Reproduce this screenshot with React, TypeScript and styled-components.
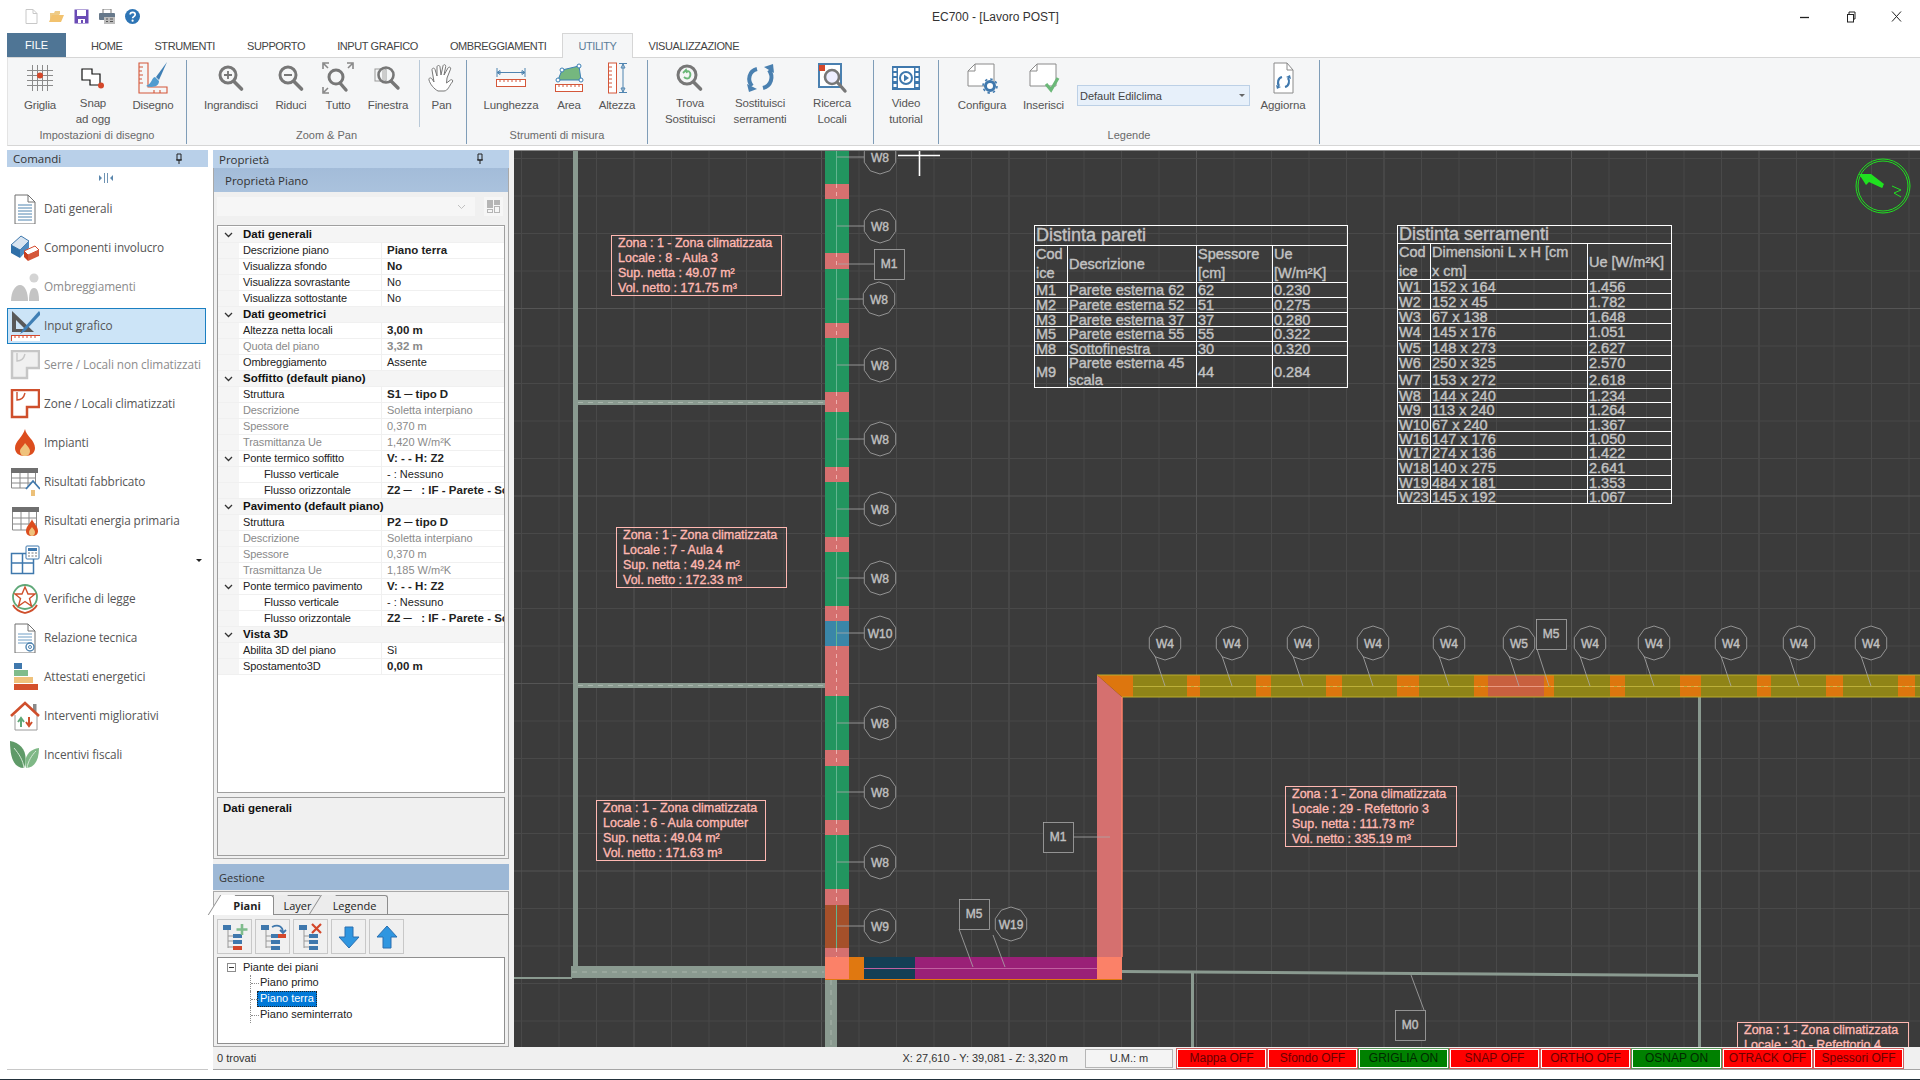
import React from 'react';
import styled, { createGlobalStyle } from 'styled-components';

const GlobalStyle = createGlobalStyle`
  html, body { margin: 0; padding: 0; background: #fff; }
  #root { width: 1920px; height: 1080px; overflow: hidden; }
  * { box-sizing: border-box; }
`;

const UI_FONT = `"Liberation Sans", Arial, sans-serif`;
const SIDE_FONT = `"Open Sans", "Liberation Sans", sans-serif`;

const Window = styled.div`
  width: 1920px;
  height: 1080px;
  display: flex;
  flex-direction: column;
  background: #fff;
  font-family: ${UI_FONT};
  border-bottom: 1px solid #22303a;
  overflow: hidden;
`;

/* ---------- title bar ---------- */
const TitleBar = styled.div`
  height: 33px;
  display: flex;
  align-items: center;
  flex-shrink: 0;
`;
const QuickBar = styled.div`
  width: 932px;
  padding-left: 25px;
  display: flex;
  align-items: center;
  gap: 10px;
`;
const Title = styled.div`
  font-size: 12px;
  color: #333;
  width: 118px;
  white-space: nowrap;
`;
const WinControls = styled.div`
  margin-left: auto;
  width: 120px;
  display: flex;
  align-items: center;
  justify-content: space-between;
  padding-right: 18px;
`;

/* ---------- ribbon ---------- */
const TabRow = styled.div`
  height: 24px;
  flex-shrink: 0;
  display: flex;
  align-items: stretch;
  padding-left: 7px;
`;
const FileTab = styled.div`
  width: 59px;
  background: #4f7595;
  color: #fff;
  font-size: 11px;
  display: flex;
  align-items: center;
  justify-content: center;
  margin-right: 9px;
`;
const RibbonTab = styled.div<{ $active?: boolean }>`
  padding: 0 15px;
  font-size: 11px;
  letter-spacing: -0.4px;
  display: flex;
  align-items: center;
  color: ${(p) => (p.$active ? '#5b7c99' : '#444')};
  background: ${(p) => (p.$active ? '#f5f6f7' : 'transparent')};
  border: 1px solid ${(p) => (p.$active ? '#d6d6d6' : 'transparent')};
  border-bottom: none;
  margin-bottom: -1px;
  position: relative;
  z-index: 1;
`;
const Ribbon = styled.div`
  height: 89px;
  flex-shrink: 0;
  margin-left: 7px;
  margin-bottom: 4px;
  background: #f5f6f7;
  border-top: 1px solid #d6d6d6;
  border-bottom: 1px solid #d6d6d6;
  border-left: 1px solid #e4e4e4;
  padding-top: 2px;
  display: flex;
`;
const Group = styled.div<{ $w: number; $pad: number }>`
  width: ${(p) => p.$w}px;
  height: 84px;
  padding-left: ${(p) => p.$pad}px;
  border-right: 1px solid #7f9db8;
  display: flex;
  flex-direction: column;
  flex-shrink: 0;
`;
const GroupRow = styled.div`
  flex: 1;
  display: flex;
  align-items: flex-start;
`;
const GroupLabel = styled.div<{ $pad: number }>`
  height: 18px;
  margin-left: -${(p) => p.$pad}px;
  font-size: 11px;
  color: #6a6a6a;
  text-align: center;
  line-height: 16px;
`;
const RibbonBtn = styled.div<{ $w: number; $sep?: boolean }>`
  width: ${(p) => p.$w}px;
  height: 67px;
  flex-shrink: 0;
  display: flex;
  flex-direction: column;
  align-items: center;
  border-left: ${(p) => (p.$sep ? '1px solid #b9c9d8' : 'none')};
`;
const BtnIcon = styled.div`
  height: 36px;
  display: flex;
  align-items: center;
  justify-content: center;
`;
const BtnLabel = styled.div<{ $two: boolean }>`
  font-size: 11.5px;
  line-height: 16px;
  letter-spacing: -0.15px;
  color: #555;
  text-align: center;
  white-space: nowrap;
  margin-top: ${(p) => (p.$two ? '-1px' : '1px')};
`;
const Combo = styled.div`
  width: 173px;
  height: 21px;
  margin-top: 25px;
  flex-shrink: 0;
  background: #e7f0fa;
  border: 1px solid #bcd0e6;
  display: flex;
  align-items: center;
  justify-content: space-between;
  padding: 0 4px 0 2px;
  font-size: 11px;
  color: #444;
`;
const ComboCaret = styled.span`
  width: 0;
  height: 0;
  border-left: 3px solid transparent;
  border-right: 3px solid transparent;
  border-top: 3px solid #666;
`;

/* ---------- work area ---------- */
const Workspace = styled.div`
  height: 920px;
  flex-shrink: 0;
  display: flex;
  padding-left: 7px;
`;
const CommandPanel = styled.div`
  width: 201px;
  flex-shrink: 0;
  display: flex;
  flex-direction: column;
  border-bottom: 1px solid #c8c8c8;
`;
const PaneHeader = styled.div<{ $h: number }>`
  height: ${(p) => p.$h}px;
  flex-shrink: 0;
  background: #b9d0e9;
  display: flex;
  align-items: center;
  justify-content: space-between;
  font-family: ${SIDE_FONT};
  font-size: 11.5px;
  color: #333;
  padding: 0 25px 0 6px;
`;
const CollapseRow = styled.div`
  height: 24px;
  display: flex;
  justify-content: center;
  align-items: center;
  padding-right: 4px;
  padding-bottom: 2px;
`;
const CommandItem = styled.div<{ $active?: boolean }>`
  width: 199px;
  height: 36px;
  margin-bottom: 3px;
  flex-shrink: 0;
  display: flex;
  align-items: center;
  gap: 4px;
  padding-left: 2px;
  position: relative;
  background: ${(p) => (p.$active ? '#cce4f7' : 'transparent')};
  border: 1px solid ${(p) => (p.$active ? '#1b7fc1' : 'transparent')};
`;
const CommandIcon = styled.div`
  width: 30px;
  height: 30px;
  flex-shrink: 0;
`;
const CommandLabel = styled.span<{ $dim?: boolean }>`
  font-family: ${SIDE_FONT};
  font-size: 11.8px;
  letter-spacing: -0.1px;
  padding-bottom: 2px;
  color: ${(p) => (p.$dim ? '#8c8c8c' : '#565656')};
  white-space: nowrap;
`;
const MenuCaret = styled.span`
  position: absolute;
  right: 3px;
  top: 16px;
  width: 0;
  height: 0;
  border-left: 3px solid transparent;
  border-right: 3px solid transparent;
  border-top: 3px solid #222;
`;

const RightArea = styled.div`
  width: 1707px;
  margin-left: 5px;
  flex-shrink: 0;
  display: flex;
  flex-direction: column;
`;
const RightTop = styled.div`
  height: 897px;
  display: flex;
  background: #f0f0f0;
`;
const PropColumn = styled.div`
  width: 296px;
  flex-shrink: 0;
  margin-right: 5px;
  display: flex;
  flex-direction: column;
`;
const PropPane = styled.div`
  height: 691px;
  flex-shrink: 0;
  border: 1px solid #a9a9a9;
  border-top: none;
  background: #f0f0f0;
  display: flex;
  flex-direction: column;
`;
const SubHeader = styled.div`
  height: 24px;
  flex-shrink: 0;
  background: linear-gradient(#a3bcd9, #aac2dd);
  font-family: ${SIDE_FONT};
  font-size: 11.5px;
  color: #333;
  display: flex;
  align-items: center;
  padding-left: 11px;
`;
const ComboRow = styled.div`
  height: 19px;
  margin: 5px 0 9px 3px;
  flex-shrink: 0;
  display: flex;
  gap: 9px;
`;
const EmptyCombo = styled.div`
  width: 258px;
  background: #f6f6f6;
  display: flex;
  align-items: center;
  justify-content: flex-end;
  padding-right: 9px;
`;
const LayoutBtn = styled.div`
  width: 19px;
  background: #f6f6f6;
  display: flex;
  align-items: center;
  justify-content: center;
`;
const PropGrid = styled.div`
  width: 288px;
  height: 568px;
  margin-left: 3px;
  flex-shrink: 0;
  border: 1px solid #9f9f9f;
  background: #fff;
  padding-top: 1px;
  overflow: hidden;
`;
const PropRow = styled.div<{ $cat?: boolean }>`
  height: 16px;
  display: flex;
  align-items: stretch;
  background: ${(p) => (p.$cat ? '#f5f5f5' : '#fff')};
  border-bottom: 1px solid #f0f0f0;
  white-space: nowrap;
`;
const Gutter = styled.div`
  width: 21px;
  flex-shrink: 0;
  background: #f5f5f5;
  display: flex;
  align-items: center;
  padding-left: 6px;
`;
const PropName = styled.div<{ $dim?: boolean; $indent?: boolean }>`
  width: 143px;
  flex-shrink: 0;
  font-size: 11px;
  line-height: 15px;
  padding-left: ${(p) => (p.$indent ? '25px' : '4px')};
  color: ${(p) => (p.$dim ? '#8a8a8a' : '#222')};
  letter-spacing: -0.1px;
  border-right: 1px solid #f0f0f0;
`;
const PropValue = styled.div<{ $dim?: boolean; $bold?: boolean }>`
  flex: 1;
  overflow: hidden;
  font-size: ${(p) => (p.$bold ? '11.5px' : '11px')};
  font-weight: ${(p) => (p.$bold ? 700 : 400)};
  line-height: 15px;
  padding-left: 5px;
  color: ${(p) => (p.$dim ? '#8a8a8a' : '#222')};
`;
const CatName = styled.div`
  font-size: 11.5px;
  font-weight: 700;
  line-height: 15px;
  padding-left: 4px;
  color: #111;
`;
const DescBox = styled.div`
  width: 288px;
  height: 59px;
  margin: 4px 0 0 3px;
  flex-shrink: 0;
  border: 1px solid #9f9f9f;
  padding: 4px 5px;
  font-size: 11.5px;
  font-weight: 700;
  color: #111;
`;
const MgmtHeader = styled.div`
  height: 26px;
  margin-top: 5px;
  flex-shrink: 0;
  background: #9db8d6;
  font-family: ${SIDE_FONT};
  font-size: 11px;
  color: #333;
  display: flex;
  align-items: center;
  padding-left: 6px;
`;
const MgmtBody = styled.div`
  flex: 1;
  border: 1px solid #a9a9a9;
  margin-top: 1px;
  display: flex;
  flex-direction: column;
  padding-top: 3px;
`;
const TabStrip = styled.div`
  height: 20px;
  flex-shrink: 0;
  display: flex;
  padding-left: 7px;
  border-bottom: 1px solid #8d8d8d;
`;
const MgmtTab = styled.div<{ $w: number; $active?: boolean }>`
  width: ${(p) => p.$w}px;
  height: ${(p) => (p.$active ? '20px' : '19px')};
  position: relative;
  display: flex;
  align-items: center;
  justify-content: center;
  font-family: ${SIDE_FONT};
  font-size: 11px;
  font-weight: ${(p) => (p.$active ? 700 : 400)};
  color: #222;
  background: ${(p) => (p.$active ? '#fff' : '#ececec')};
  border-top: 1px solid #8d8d8d;
  border-right: 1px solid #8d8d8d;
  border-top-right-radius: 3px;
  z-index: ${(p) => (p.$active ? 2 : 1)};
  &::before {
    content: '';
    position: absolute;
    left: -7px;
    top: -1px;
    width: 14px;
    height: ${(p) => (p.$active ? '20px' : '19px')};
    background: inherit;
    border-left: 1px solid #8d8d8d;
    transform: skewX(-32deg);
    z-index: -1;
  }
`;
const ToolRow = styled.div`
  height: 35px;
  margin: 4px 0 3px 3px;
  flex-shrink: 0;
  display: flex;
  gap: 3px;
`;
const ToolBtn = styled.div`
  width: 35px;
  height: 35px;
  border: 1px solid #c8c8c8;
  background: #f0f0f0;
  display: flex;
  align-items: center;
  justify-content: center;
`;
const TreeBox = styled.div`
  width: 288px;
  height: 87px;
  margin-left: 3px;
  flex-shrink: 0;
  border: 1px solid #8f8f8f;
  background: #fff;
  padding-top: 1px;
  position: relative;
`;
const TreeRoot = styled.div`
  height: 16px;
  display: flex;
  align-items: center;
  padding-left: 9px;
  font-size: 11px;
  color: #222;
`;
const Expander = styled.span`
  width: 9px;
  height: 9px;
  margin-right: 7px;
  border: 1px solid #8d8d8d;
  position: relative;
  &::after {
    content: '';
    position: absolute;
    left: 1px;
    right: 1px;
    top: 3px;
    height: 1px;
    background: #333;
  }
`;
const TreeLeaf = styled.div`
  height: 16px;
  margin-left: 32px;
  padding-left: 9px;
  display: flex;
  align-items: center;
  font-size: 11px;
  color: #222;
  border-left: 1px dotted #8d8d8d;
  position: relative;
  &::before {
    content: '';
    position: absolute;
    left: 0;
    top: 8px;
    width: 8px;
    border-top: 1px dotted #8d8d8d;
  }
`;
const LeafText = styled.span<{ $selected?: boolean }>`
  padding: 0 3px;
  margin-left: -3px;
  height: 16px;
  line-height: 15px;
  background: ${(p) => (p.$selected ? '#0078d7' : 'transparent')};
  color: ${(p) => (p.$selected ? '#fff' : '#222')};
  outline: ${(p) => (p.$selected ? '1px dotted #222' : 'none')};
  outline-offset: -1px;
`;

/* ---------- canvas ---------- */
const Canvas = styled.div`
  flex: 1;
  position: relative;
  background: #3b3b3b;
  overflow: hidden;
  border-top: 1px solid #8a8a8a;
`;
const PlanSvg = styled.svg`
  position: absolute;
  left: 0;
  top: 0;
  display: block;
`;
const ZoneBox = styled.div<{ $x: number; $y: number; $w: number }>`
  position: absolute;
  left: ${(p) => p.$x - 514}px;
  top: ${(p) => p.$y - 151}px;
  width: ${(p) => p.$w}px;
  height: 61px;
  border: 1px solid #ffb8b2;
  padding: 0 6px;
  color: #ffb8b2;
  font-size: 12.5px;
  line-height: 15px;
  white-space: nowrap;
  -webkit-text-stroke: 0.35px #ffb8b2;
`;
const SheetTable = styled.table<{ $x: number; $w: number }>`
  position: absolute;
  left: ${(p) => p.$x - 514}px;
  top: 74px;
  width: ${(p) => p.$w}px;
  border-collapse: collapse;
  table-layout: fixed;
  color: #c2c2c2;
  font-size: 14.5px;
  line-height: 12px;
  -webkit-text-stroke: 0.4px #c2c2c2;
`;
const SheetRow = styled.tr<{ $h: number }>`
  height: ${(p) => p.$h}px;
`;
const SheetCell = styled.td`
  border: 1px solid #fff;
  padding: 0 1px;
  white-space: nowrap;
`;
const SheetLines = styled.div<{ $lh: number }>`
  line-height: ${(p) => p.$lh}px;
  margin: -2px 0;
`;
const SheetTitle = styled(SheetCell)`
  font-size: 18px;
  line-height: 15px;
`;

/* ---------- status bar ---------- */
const StatusBar = styled.div`
  height: 23px;
  flex-shrink: 0;
  background: #f0f0f0;
  border-bottom: 1px solid #a5a5a5;
  display: flex;
  align-items: center;
  padding: 0 17px 0 4px;
  font-size: 11px;
  color: #333;
`;
const Coords = styled.div`
  margin-left: auto;
  margin-right: 17px;
  white-space: nowrap;
`;
const UnitBox = styled.div`
  width: 88px;
  height: 19px;
  margin-right: 4px;
  border: 1px solid #b5b5b5;
  display: flex;
  align-items: center;
  justify-content: center;
  background: #f4f4f4;
`;
const ToggleRow = styled.div`
  display: flex;
  gap: 2px;
`;
const Toggle = styled.div<{ $on: boolean }>`
  width: 89px;
  height: 19px;
  background: ${(p) => (p.$on ? '#008000' : '#ff0000')};
  color: ${(p) => (p.$on ? '#002a00' : '#6a0000')};
  border: 1px solid #fff;
  outline: 1px solid ${(p) => (p.$on ? '#5a9a5a' : '#d06060')};
  font-size: 12px;
  display: flex;
  align-items: center;
  justify-content: center;
`;

/* ---------- icons ---------- */
const Svg = ({ s = 32, h, children }: { s?: number; h?: number; children: React.ReactNode }) => (
  <svg width={s} height={h ?? s} viewBox={`0 0 ${s} ${h ?? s}`} fill="none">
    {children}
  </svg>
);

const PinIcon = () => (
  <Svg s={8} h={12}>
    <path d="M2 1h4v6H2zM1 7h6M4 7v4" stroke="#222" strokeWidth="1" />
  </Svg>
);
const Chevron = () => (
  <Svg s={9} h={6}>
    <path d="M1 1l3.5 3.5L8 1" stroke="#333" strokeWidth="1.3" />
  </Svg>
);

const quickIcons = [
  <Svg s={13} h={15} key="new">
    <path d="M1 .5h7l4 4v10H1z" fill="#fff" stroke="#c8c8c8" />
    <path d="M8 .5v4h4" stroke="#c8c8c8" />
  </Svg>,
  <Svg s={16} h={13} key="open">
    <path d="M2 12V3h4l1-2h5v3" fill="#eecb86" />
    <path d="M1 12l3-7h12l-3 7z" fill="#f2c26e" />
  </Svg>,
  <Svg s={15} h={15} key="save">
    <rect x=".5" y=".5" width="14" height="14" fill="#6a4bb5" />
    <rect x="3" y="1" width="9" height="6" fill="#fff" />
    <rect x="4" y="10" width="7" height="4" fill="#fff" />
    <rect x="7" y="11" width="2" height="3" fill="#6a4bb5" />
  </Svg>,
  <Svg s={16} h={15} key="print">
    <rect x="4" y="0" width="8" height="5" fill="#fff" stroke="#777" />
    <rect x="0" y="4" width="16" height="7" rx="1" fill="#66788a" />
    <rect x="5" y="8" width="11" height="7" fill="#bcbcbc" />
    <path d="M7 10h2M11 10h3M7 12.5h2M11 12.5h3" stroke="#555" />
  </Svg>,
  <Svg s={15} h={15} key="help">
    <circle cx="7.5" cy="7.5" r="7.5" fill="#2e75b5" />
    <path d="M5.2 5.6c0-3 5-3 5 0 0 2-2.6 2-2.6 3.6" stroke="#fff" strokeWidth="1.7" />
    <circle cx="7.6" cy="11.7" r="1.1" fill="#fff" />
  </Svg>,
];

const Mag = ({ children, r = 8 }: { children?: React.ReactNode; r?: number }) => (
  <Svg>
    <path d="M18.5 19l8 8" stroke="#777" strokeWidth="3.6" strokeLinecap="round" />
    <circle cx="13" cy="13" r={r} stroke="#777" strokeWidth="3" fill="#f5f6f7" />
    {children}
  </Svg>
);

const GridIcon = () => (
  <Svg>
    <path d="M3 8.500h26M3 13.500h26M3 18.500h26M3 23.500h26M8.500 3v26M13.500 3v26M18.500 3v26M23.500 3v26" stroke="#8b8b8b" />
    <circle cx="16" cy="13.500" r="3" fill="#d4472a" />
  </Svg>
);
const SnapIcon = () => (
  <Svg>
    <path d="M5 7h10v5h8v11H13v-5H5z" stroke="#111" strokeWidth="1.2" fill="#fff" />
    <circle cx="24" cy="23.500" r="3" fill="#d4472a" />
  </Svg>
);
const DrawIcon = () => (
  <Svg>
    <path d="M2 1h9v24h19v6H2zM2 5h4M2 9h3M2 13h4M2 17h3M2 21h4M17 31v-3M23 31v-3" stroke="#d4573a" strokeWidth="1.1" />
    <path d="M30 0L19 15l3 3z" fill="#3f7fb5" />
    <path d="M18 15c-4 1-2 6-9 9 6 2 13 1 13-5z" fill="#4f9bd0" />
  </Svg>
);
const AllIcon = () => (
  <Svg>
    <path d="M18 21l6 7" stroke="#777" strokeWidth="3.4" strokeLinecap="round" />
    <circle cx="14" cy="15" r="7" stroke="#777" strokeWidth="3" />
    <path d="M1 7V1h6M2 2l4 4M31 7V1h-6M30 2l-4 4M1 25v6h6M2 30l4-4" stroke="#888" strokeWidth="1.6" />
  </Svg>
);
const WindowIcon = () => (
  <Svg>
    <path d="M19 19l7 7" stroke="#777" strokeWidth="3.4" strokeLinecap="round" />
    <rect x="3" y="7" width="11" height="12" fill="#f5f6f7" stroke="#999" />
    <circle cx="14" cy="13" r="7.500" stroke="#777" strokeWidth="2.600" />
    <rect x="10" y="8" width="4" height="10" fill="#ccc" />
  </Svg>
);
const HandIcon = () => (
  <Svg>
    <path
      d="M12 29c-4-2-8-7-9-11-.5-2 1.500-3 3-1l2 3L6 8c-.3-2 2.400-2.600 3-.6L11 14 11 5c0-2 3-2 3 0l1 8 2-9c.4-2 3-1.500 2.700.4L18 13l4-7c1-1.800 3.400-.6 2.500 1.200L21 16l-.5 5 4-3c1.500-1 3 .6 1.800 2-3 3.500-4.300 9-8.300 9z"
      stroke="#777"
      strokeWidth="1"
      fill="#fff"
    />
  </Svg>
);
const LengthIcon = () => (
  <Svg>
    <path d="M2 10.500h28M2 6v9M30 6v9M2 10.500l3-2v4zM30 10.500l-3-2v4z" stroke="#4f84b0" />
    <rect x="1.500" y="17.500" width="29" height="7" stroke="#d4573a" fill="#fff" />
    <path d="M5 18v2M9 18v2M13 18v2M17 18v2M21 18v2M25 18v2" stroke="#d4573a" />
  </Svg>
);
const AreaIcon = () => (
  <Svg>
    <path d="M5 18L9 8l17-4 2 14z" fill="#75b77f" stroke="#3b7fb5" />
    <circle cx="5" cy="18" r="2" fill="#fff" stroke="#3b7fb5" />
    <circle cx="9" cy="8" r="2" fill="#fff" stroke="#3b7fb5" />
    <circle cx="26" cy="4" r="2" fill="#fff" stroke="#3b7fb5" />
    <circle cx="28" cy="18" r="2" fill="#fff" stroke="#3b7fb5" />
    <rect x="2.500" y="22.500" width="27" height="7" stroke="#d4573a" fill="#fff" />
    <path d="M6 23v2M10 23v2M14 23v2M18 23v2M22 23v2M26 23v2" stroke="#d4573a" />
  </Svg>
);
const HeightIcon = () => (
  <Svg>
    <rect x="7.500" y="1" width="8" height="30" stroke="#d4573a" fill="#fff" />
    <path d="M8 5h3M8 9h3M8 13h3M8 17h3M8 21h3M8 25h3" stroke="#d4573a" />
    <path d="M18 1.500h8M18 30.500h8M22 2v28M22 2l-2 4h4zM22 30l-2-4h4z" stroke="#4f84b0" />
  </Svg>
);
const FindIcon = () => (
  <Mag r={9}>
    <path d="M9 11l3-3 1 3M11 9c5-1 7 3 4 7-2 1-4 0-5-1" stroke="#6bb878" strokeWidth="1.800" />
  </Mag>
);
const SwapIcon = () => (
  <Svg>
    <path d="M13 7C5 9 3 18 8 24" stroke="#4a80b0" strokeWidth="4" />
    <path d="M3 22l10 5-8 3z" fill="#4a80b0" />
    <path d="M19 26C27 24 30 15 25 8" stroke="#4a80b0" strokeWidth="4" />
    <path d="M30 11L20 5l9-3z" fill="#4a80b0" />
  </Svg>
);
const SearchLocIcon = () => (
  <Svg>
    <rect x="3" y="2" width="22" height="23" fill="#fff" stroke="#4a80b0" strokeWidth="2" />
    <rect x="3" y="3" width="6" height="6" fill="#d4472a" />
    <path d="M22 21l7 8" stroke="#777" strokeWidth="3.400" strokeLinecap="round" />
    <circle cx="16" cy="15" r="7" fill="#eef" stroke="#777" strokeWidth="2.600" />
  </Svg>
);
const VideoIcon = () => (
  <Svg>
    <rect x="2" y="4" width="28" height="24" fill="#3f78ad" />
    <rect x="3.500" y="6" width="3" height="3" fill="#fff" />
    <rect x="3.500" y="11" width="3" height="3" fill="#fff" />
    <rect x="3.500" y="16" width="3" height="3" fill="#fff" />
    <rect x="3.500" y="22" width="3" height="3" fill="#fff" />
    <rect x="25.500" y="6" width="3" height="3" fill="#fff" />
    <rect x="25.500" y="11" width="3" height="3" fill="#fff" />
    <rect x="25.500" y="16" width="3" height="3" fill="#fff" />
    <rect x="25.500" y="22" width="3" height="3" fill="#fff" />
    <rect x="8" y="6" width="16" height="20" fill="#fff" />
    <circle cx="16" cy="16" r="6" stroke="#3f78ad" strokeWidth="2" />
    <path d="M14 12.500l5 3.500-5 3.500z" fill="#3f78ad" />
  </Svg>
);
const Sheet = ({ children }: { children: React.ReactNode }) => (
  <Svg>
    <path d="M2 9l7-7h19v22H2z" stroke="#8a8a8a" fill="#fff" />
    <path d="M2 9h7V2" stroke="#8a8a8a" />
    {children}
  </Svg>
);
const ConfigIcon = () => (
  <Sheet>
    <circle cx="24" cy="24" r="4.500" stroke="#3f78ad" strokeWidth="3" fill="#fff" />
    <circle cx="24" cy="24" r="7" stroke="#3f78ad" strokeWidth="1.500" strokeDasharray="2.500 3" />
  </Sheet>
);
const InsertIcon = () => (
  <Sheet>
    <path d="M18 22l5 6 7-12" stroke="#6bb878" strokeWidth="3.200" />
  </Sheet>
);
const RefreshIcon = () => (
  <Svg>
    <path d="M7 1h13l6 7v23H7z" stroke="#8a8a8a" fill="#fff" />
    <path d="M20 1v7h6" stroke="#8a8a8a" />
    <path d="M15 15c-4 1-5 6-3 9M18 25c4-1 5-6 3-9" stroke="#3f78ad" strokeWidth="2.200" />
    <path d="M9 23l5 2-4 2zM24 17l-5-2 4-2z" fill="#3f78ad" />
  </Svg>
);

const DocLines = ({ blue }: { blue?: boolean }) => (
  <>
    <path d="M5 1h13l7 7v22H5z" stroke="#707070" fill="#fff" />
    <path d="M18 1v7h7" stroke="#707070" />
    <path d="M8 11h14M8 14h14M8 17h14M8 20h14" stroke={blue ? '#6f9dc4' : '#4f84b0'} />
  </>
);
const commandIcons: Record<string, React.ReactNode> = {
  doc: (
    <Svg s={30}>
      <DocLines />
      <path d="M8 23h14M8 26h14" stroke="#4f84b0" />
    </Svg>
  ),
  comp: (
    <Svg s={30}>
      <path d="M1 12L11 3l8 5-9 9z" fill="#d8e4f0" stroke="#3f78ad" />
      <path d="M1 12l9 5v8l-9-5z" fill="#2f6fa8" />
      <path d="M10 17l9-9v7l-9 10z" fill="#4f8bc0" />
      <path d="M14 18l11-5 4 4-11 5z" fill="#fff" stroke="#d4472a" />
      <path d="M14 18l4 4v6l-4-4z" fill="#c9401f" />
      <path d="M18 22l11-5v6l-11 5z" fill="#d4573a" />
    </Svg>
  ),
  shade: (
    <Svg s={30}>
      <circle cx="24" cy="6" r="4.500" fill="#d4d4d4" />
      <path d="M1 29c0-9 4-16 9-16s8 7 8 16z" fill="#c4c4c4" />
      <path d="M19 29c0-7 1-13 5-13s5 6 5 13z" fill="#c4c4c4" />
    </Svg>
  ),
  input: (
    <Svg s={30}>
      <path d="M2 0l22 21H2z" fill="#595959" />
      <path d="M6 9l9 9H6z" fill="#cce4f7" />
      <path d="M29 0L13 18l-3 5 5-3L31 3z" fill="#3f7fb5" />
      <rect x="1.500" y="24.500" width="29" height="7" stroke="#d4472a" fill="#fff" />
      <path d="M5 25v2M9 25v2M13 25v2M17 25v2M21 25v2M25 25v2" stroke="#d4472a" />
    </Svg>
  ),
  serre: (
    <Svg s={30}>
      <path d="M2 1h27v17H17v10H2z" fill="#f0f0f0" stroke="#c6c6c6" strokeWidth="2.500" />
      <path d="M7 3v8c5 0 7-3 8-7" stroke="#c6c6c6" strokeWidth="1.400" />
    </Svg>
  ),
  zone: (
    <Svg s={30}>
      <path d="M2 1h27v17H17v10H2z" fill="#fff" stroke="#cf4f2c" strokeWidth="2.500" />
      <path d="M7 3v8c5 0 7-3 8-7" stroke="#cf4f2c" strokeWidth="1.400" />
    </Svg>
  ),
  fire: (
    <Svg s={30}>
      <path d="M15 1c1 7 10 11 10 19 0 5-4 8-10 8S5 25 5 20C5 13 13 9 15 1z" fill="#dc4d1e" />
      <path d="M15 15c2 3 5 5 5 8s-2 5-5 5-5-2-5-5 4-5 5-8z" fill="#efc27c" />
    </Svg>
  ),
  resBuild: (
    <Svg s={30}>
      <rect x="1" y="1" width="27" height="5" fill="#6f6f6f" />
      <path d="M1.500 6v15h24V6M1.500 11h24M1.500 16h24M10 6v15M18 6v15" stroke="#8a8a8a" />
      <path d="M16 22l7-8 7 8" fill="#fff" stroke="#3f78ad" strokeWidth="1.800" />
      <rect x="18" y="21" width="10" height="8" fill="#fff" />
      <rect x="21" y="23" width="4" height="6" fill="#ecc078" />
    </Svg>
  ),
  resEnergy: (
    <Svg s={30}>
      <rect x="2" y="1" width="27" height="5" fill="#6f6f6f" />
      <path d="M2.500 6v18h24V6M2.500 12h24M2.500 18h24M11 6v18M19 6v18" stroke="#8a8a8a" />
      <path d="M22 13c1 4 6 7 6 12 0 3-2 5-6 5s-6-2-6-5c0-5 5-8 6-12z" fill="#dc4d1e" />
      <path d="M22 21c1 2 3 3 3 5s-1 4-3 4-3-2-3-4 2-3 3-5z" fill="#efc27c" />
    </Svg>
  ),
  calc: (
    <Svg s={30}>
      <rect x="1.500" y="8.500" width="22" height="20" fill="#fff" stroke="#3f78ad" strokeWidth="1.500" />
      <path d="M12.500 8v20M2 18h21" stroke="#3f78ad" strokeWidth="1.500" />
      <rect x="16" y="1" width="13" height="13" rx="1" fill="#fff" stroke="#3f78ad" />
      <rect x="18" y="3" width="9" height="3" fill="#3f78ad" />
      <path d="M18 8h2M21.500 8h2M25 8h2M18 11h2M21.500 11h2M25 11h2" stroke="#777" />
    </Svg>
  ),
  law: (
    <Svg s={30}>
      <circle cx="15" cy="13" r="12" stroke="#5fa878" strokeWidth="1.800" />
      <path
        d="M15 3l3 7h7l-5.500 4.500 2 7.500L15 17.500 8.500 22l2-7.500L5 10h7z"
        fill="#fff"
        stroke="#cf4f2c"
        strokeWidth="1.400"
      />
      <path d="M3 21c3 6 8 7 12 8 4-1 9-2 12-8" stroke="#cf4f2c" strokeWidth="1.800" />
    </Svg>
  ),
  report: (
    <Svg s={30}>
      <DocLines blue />
      <circle cx="20" cy="24" r="4" stroke="#4f84b0" strokeWidth="1.400" />
      <circle cx="20" cy="24" r="1.500" stroke="#4f84b0" />
    </Svg>
  ),
  cert: (
    <Svg s={30}>
      <rect x="4" y="1" width="8" height="6" fill="#3f78ad" />
      <rect x="4" y="8" width="14" height="6" fill="#7fbc8c" />
      <rect x="4" y="15" width="19" height="6" fill="#efc27c" />
      <rect x="4" y="22" width="24" height="6" fill="#d4502c" />
    </Svg>
  ),
  improve: (
    <Svg s={30}>
      <path d="M5 14v15h22V14" fill="#fff" stroke="#9a9a9a" />
      <rect x="23" y="3" width="3.500" height="8" fill="#8a8a8a" />
      <path d="M1 15L15 2l14 13" stroke="#cf4f2c" strokeWidth="2.600" />
      <path d="M11 26v-8M8 21l3-4 3 4" stroke="#5fa878" strokeWidth="2" />
      <path d="M19 16v8M16 21l3 4 3-4" stroke="#cf4f2c" strokeWidth="2" />
    </Svg>
  ),
  leaf: (
    <Svg s={30}>
      <path d="M0 1c12 2 19 12 14 27C5 28 0 20 0 1z" fill="#5f9a68" />
      <path d="M29 8c-9 1-16 8-13 20 8 0 13-7 13-20z" fill="#7fb886" />
      <path d="M4 8c5 6 9 12 10 20M26 11c-4 4-8 10-9 17" stroke="#d4e8d6" />
    </Svg>
  ),
};

const TreeStack = ({ top }: { top: React.ReactNode }) => (
  <Svg s={28}>
    <path d="M7 6v19M7 13h5M7 18h5M7 24h5" stroke="#999" />
    <rect x="2" y="2" width="8" height="5" fill="#3f78ad" />
    <rect x="12" y="11" width="9" height="4" fill="#3f78ad" />
    <rect x="12" y="17" width="9" height="4" fill="#3f78ad" />
    {top}
  </Svg>
);
const toolIcons = [
  <TreeStack
    key="add"
    top={
      <>
        <rect x="12" y="23" width="9" height="4" fill="#d4472a" />
        <path d="M21 1v11M15.500 6.500h11" stroke="#7fbc8c" strokeWidth="2.600" />
      </>
    }
  />,
  <TreeStack
    key="move"
    top={
      <>
        <rect x="12" y="23" width="9" height="4" fill="#3f78ad" />
        <rect x="19" y="11" width="8" height="4" fill="#d4472a" />
        <path d="M13 4c6-3 11-1 11 6M21 7l3 3 3-3" stroke="#3f78ad" strokeWidth="1.800" />
      </>
    }
  />,
  <TreeStack
    key="del"
    top={
      <>
        <rect x="12" y="23" width="9" height="4" fill="#3f78ad" />
        <path d="M15 1l9 9M24 1l-9 9" stroke="#d4472a" strokeWidth="2.200" />
      </>
    }
  />,
  <Svg s={24} key="down">
    <path d="M8 2h8v10h6L12 23 2 12h6z" fill="#2f96e0" stroke="#2a6fb0" />
  </Svg>,
  <Svg s={24} key="up">
    <path d="M8 23h8V12h6L12 1 2 12h6z" fill="#2f96e0" stroke="#2a6fb0" />
  </Svg>,
];

/* ---------- data ---------- */
const tabs = ['HOME', 'STRUMENTI', 'SUPPORTO', 'INPUT GRAFICO', 'OMBREGGIAMENTI', 'UTILITY', 'VISUALIZZAZIONE'];

const commands = [
  { label: 'Dati generali', icon: 'doc' },
  { label: 'Componenti involucro', icon: 'comp' },
  { label: 'Ombreggiamenti', icon: 'shade', dim: true },
  { label: 'Input grafico', icon: 'input', active: true },
  { label: 'Serre / Locali non climatizzati', icon: 'serre', dim: true },
  { label: 'Zone / Locali climatizzati', icon: 'zone' },
  { label: 'Impianti', icon: 'fire' },
  { label: 'Risultati fabbricato', icon: 'resBuild' },
  { label: 'Risultati energia primaria', icon: 'resEnergy' },
  { label: 'Altri calcoli', icon: 'calc', caret: true },
  { label: 'Verifiche di legge', icon: 'law' },
  { label: 'Relazione tecnica', icon: 'report' },
  { label: 'Attestati energetici', icon: 'cert' },
  { label: 'Interventi migliorativi', icon: 'improve' },
  { label: 'Incentivi fiscali', icon: 'leaf' },
];

type Prop = { cat?: string; n?: string; v?: string; b?: boolean; d?: boolean; i?: boolean; c?: boolean };
const FLOW_H = 'Z2 ─\u00a0\u00a0\u00a0: IF - Parete - Solaio';
const props: Prop[] = [
  { cat: 'Dati generali' },
  { n: 'Descrizione piano', v: 'Piano terra', b: true },
  { n: 'Visualizza sfondo', v: 'No', b: true },
  { n: 'Visualizza sovrastante', v: 'No' },
  { n: 'Visualizza sottostante', v: 'No' },
  { cat: 'Dati geometrici' },
  { n: 'Altezza netta locali', v: '3,00 m', b: true },
  { n: 'Quota del piano', v: '3,32 m', b: true, d: true },
  { n: 'Ombreggiamento', v: 'Assente' },
  { cat: 'Soffitto (default piano)' },
  { n: 'Struttura', v: 'S1 ─ tipo D', b: true },
  { n: 'Descrizione', v: 'Soletta interpiano', d: true },
  { n: 'Spessore', v: '0,370 m', d: true },
  { n: 'Trasmittanza Ue', v: '1,420 W/m²K', d: true },
  { n: 'Ponte termico soffitto', v: 'V: - - H: Z2', b: true, c: true },
  { n: 'Flusso verticale', v: '- : Nessuno', i: true },
  { n: 'Flusso orizzontale', v: FLOW_H, b: true, i: true },
  { cat: 'Pavimento (default piano)' },
  { n: 'Struttura', v: 'P2 ─ tipo D', b: true },
  { n: 'Descrizione', v: 'Soletta interpiano', d: true },
  { n: 'Spessore', v: '0,370 m', d: true },
  { n: 'Trasmittanza Ue', v: '1,185 W/m²K', d: true },
  { n: 'Ponte termico pavimento', v: 'V: - - H: Z2', b: true, c: true },
  { n: 'Flusso verticale', v: '- : Nessuno', i: true },
  { n: 'Flusso orizzontale', v: FLOW_H, b: true, i: true },
  { cat: 'Vista 3D' },
  { n: 'Abilita 3D del piano', v: 'Sì' },
  { n: 'Spostamento3D', v: '0,00 m', b: true },
];

const zones = [
  { x: 611, y: 235, w: 171, lines: ['Zona : 1 - Zona climatizzata', 'Locale : 8 - Aula 3', 'Sup. netta : 49.07 m²', 'Vol. netto : 171.75 m³'] },
  { x: 616, y: 527, w: 171, lines: ['Zona : 1 - Zona climatizzata', 'Locale : 7 - Aula 4', 'Sup. netta : 49.24 m²', 'Vol. netto : 172.33 m³'] },
  { x: 596, y: 800, w: 170, lines: ['Zona : 1 - Zona climatizzata', 'Locale : 6 - Aula computer', 'Sup. netta : 49.04 m²', 'Vol. netto : 171.63 m³'] },
  { x: 1285, y: 786, w: 172, lines: ['Zona : 1 - Zona climatizzata', 'Locale : 29 - Refettorio 3', 'Sup. netta : 111.73 m²', 'Vol. netto : 335.19 m³'] },
  { x: 1737, y: 1022, w: 172, lines: ['Zona : 1 - Zona climatizzata', 'Locale : 30 - Refettorio 4'] },
];

const wallRows = [
  ['M1', 'Parete esterna 62', '62', '0.230', 15],
  ['M2', 'Parete esterna 52', '51', '0.275', 15],
  ['M3', 'Parete esterna 37', '37', '0.280', 14],
  ['M5', 'Parete esterna 55', '55', '0.322', 15],
  ['M8', 'Sottofinestra', '30', '0.320', 14],
] as const;

const windowRows = [
  ['W1', '152 x 164', '1.456', 14],
  ['W2', '152 x 45', '1.782', 16],
  ['W3', '67 x 138', '1.648', 14],
  ['W4', '145 x 176', '1.051', 17],
  ['W5', '148 x 273', '2.627', 15],
  ['W6', '250 x 325', '2.570', 15],
  ['W7', '153 x 272', '2.618', 18],
  ['W8', '144 x 240', '1.234', 14],
  ['W9', '113 x 240', '1.264', 15],
  ['W10', '67 x 240', '1.367', 14],
  ['W16', '147 x 176', '1.050', 14],
  ['W17', '274 x 136', '1.422', 14],
  ['W18', '140 x 275', '2.641', 16],
  ['W19', '484 x 181', '1.353', 14],
  ['W23', '145 x 192', '1.067', 14],
] as const;

const toggles: [string, boolean][] = [
  ['Mappa OFF', false],
  ['Sfondo OFF', false],
  ['GRIGLIA ON', true],
  ['SNAP OFF', false],
  ['ORTHO OFF', false],
  ['OSNAP ON', true],
  ['OTRACK OFF', false],
  ['Spessori OFF', false],
];

/* ---------- drawing ---------- */
const G = '#22955f';
const R = '#d5706f';
const columnSegs: [number, number, string][] = [
  [150, 184, G], [184, 199, R], [199, 253, G], [253, 269, R], [269, 323, G], [323, 338, R],
  [338, 392, G], [392, 412, R], [412, 467, G], [467, 482, R], [482, 537, G], [537, 552, R],
  [552, 606, G], [606, 621, R], [621, 646, '#3a86a8'], [646, 696, R], [696, 750, G], [750, 766, R],
  [766, 820, G], [820, 835, R], [835, 889, G], [889, 905, R], [905, 948, '#a5502a'], [948, 957, R],
];

const O = '#dd760e';
const V = '#8f8417';
const facadeSegs: [number, number, string][] = [
  [1133, 1187, V], [1187, 1200, O], [1200, 1256, V], [1256, 1271, O], [1271, 1326, V], [1326, 1342, O],
  [1342, 1397, V], [1397, 1419, O], [1419, 1474, V], [1474, 1488, O], [1488, 1544, '#c8603f'], [1544, 1554, O],
  [1554, 1610, V], [1610, 1625, O], [1625, 1680, V], [1680, 1701, O], [1701, 1757, V], [1757, 1771, O],
  [1771, 1826, V], [1826, 1843, O], [1843, 1898, V], [1898, 1915, O], [1915, 1920, V],
];

const sideTags: [string, number, number][] = [
  ['W8', 880, 157], ['W8', 880, 226], ['W8', 879, 299], ['W8', 880, 365], ['W8', 880, 439],
  ['W8', 880, 509], ['W8', 880, 578], ['W10', 880, 633], ['W8', 880, 723], ['W8', 880, 792],
  ['W8', 880, 862], ['W9', 880, 926],
];
const facadeTags: [string, number][] = [
  ['W4', 1165], ['W4', 1232], ['W4', 1303], ['W4', 1373], ['W4', 1449], ['W5', 1519],
  ['W4', 1590], ['W4', 1654], ['W4', 1731], ['W4', 1799], ['W4', 1871],
];

const hexPoints = (cx: number, cy: number) =>
  Array.from({ length: 10 }, (_, i) => {
    const a = ((-90 + i * 36) * Math.PI) / 180;
    return `${(cx + 16.5 * Math.cos(a)).toFixed(1)},${(cy + 17 * Math.sin(a)).toFixed(1)}`;
  }).join(' ');

const Tag = ({ t, x, y }: { t: string; x: number; y: number }) => (
  <g>
    <polygon points={hexPoints(x, y)} fill="#3b3b3b" stroke="#aaa" strokeWidth="0.8" />
    <text x={x} y={y + 4.5} textAnchor="middle" fontSize="12" fill="#c0c0c0" stroke="#c0c0c0" strokeWidth="0.4" fontFamily={UI_FONT}>
      {t}
    </text>
  </g>
);
const BoxTag = ({ t, x, y, w = 30, h = 30 }: { t: string; x: number; y: number; w?: number; h?: number }) => (
  <g>
    <rect x={x + 0.5} y={y + 0.5} width={w} height={h} fill="#3b3b3b" stroke="#aaa" strokeWidth="0.8" />
    <text x={x + w / 2} y={y + h / 2 + 4} textAnchor="middle" fontSize="12" fill="#c0c0c0" stroke="#c0c0c0" strokeWidth="0.4" fontFamily={UI_FONT}>
      {t}
    </text>
  </g>
);

const Plan = () => {
  const gridX = Array.from({ length: 38 }, (_, k) => ({ p: 521.5 + 37.5 * k, major: (k + 2 - 5) % 5 === 0 }));
  const gridY = Array.from({ length: 24 }, (_, k) => ({ p: 158.5 + 37.5 * k, major: (k - 4) % 5 === 0 }));
  return (
    <PlanSvg width={1406} height={896} viewBox="514 151 1406 896" fill="none">
      {gridX.map((g) => (
        <line key={g.p} x1={g.p} x2={g.p} y1={150} y2={1047} stroke={g.major ? '#555' : '#494949'} />
      ))}
      {gridY.map((g) => (
        <line key={g.p} y1={g.p} y2={g.p} x1={514} x2={1920} stroke={g.major ? '#555' : '#494949'} />
      ))}

      {/* partitions */}
      <g fill="#8a9a90">
        <rect x="573" y="150" width="5" height="818" />
        <rect x="578" y="400" width="247" height="5" />
        <rect x="578" y="683" width="247" height="5" />
        <rect x="571" y="966" width="254" height="12" />
        <rect x="514" y="977" width="58" height="2" />
        <rect x="825" y="979" width="12" height="68" />
        <rect x="1698" y="697" width="3" height="350" />
        <rect x="1191" y="973" width="3" height="74" />
        <polygon points="1122,970 1699,974 1699,977 1122,973" />
      </g>
      <path d="M578 402.500h247M578 685.500h247M572 972h252M831 980v67" stroke="#b4c0b8" strokeDasharray="5 5" strokeWidth="0.7" />

      {/* west facade */}
      {columnSegs.map(([a, b, c]) => (
        <rect key={a} x="825" y={a} width="24" height={b - a} fill={c} />
      ))}
      <line x1="836.5" x2="836.5" y1="150" y2="957" stroke="#62b58f" />
      {columnSegs
        .filter((s) => s[2] === R)
        .map(([a, b]) => (
          <line key={a} x1="836.5" x2="836.5" y1={a} y2={b} stroke={R} />
        ))}
      {columnSegs
        .filter((s) => s[2] === R)
        .map(([a, b]) => (
          <line key={a} x1="836.5" x2="836.5" y1={a} y2={b} stroke="#efb0ae" strokeDasharray="4 4" />
        ))}

      {/* south wall */}
      <rect x="825" y="957" width="24" height="22" fill="#fb8168" />
      <rect x="849" y="957" width="15" height="22" fill="#e07810" />
      <rect x="864" y="957" width="51" height="22" fill="#143f55" />
      <rect x="915" y="957" width="182" height="22" fill="#9a2077" />
      <rect x="1097" y="957" width="25" height="22" fill="#fb8168" />
      <line x1="864" x2="1097" y1="968.5" y2="968.5" stroke="#c060a0" strokeWidth="1" />
      <line x1="825" x2="1122" y1="979.5" y2="979.5" stroke="#e07810" />

      {/* east wall */}
      <polygon points="1097,675 1122,697 1122,957 1097,957" fill="#d5706f" />
      <polyline points="1122,697 1122,957" stroke="#fb8168" strokeWidth="1.500" />
      <polygon points="1097,675 1133,675 1133,697 1122,697" fill={O} />

      {/* north facade */}
      {facadeSegs.map(([a, b, c]) => (
        <rect key={a} x={a} y="675" width={b - a} height="22" fill={c} />
      ))}
      <path d="M1097 675h823M1122 697h798" stroke="#b9ac2e" />
      <line x1="1133" x2="1920" y1="686.5" y2="686.5" stroke="#bdb03a" />
      {facadeSegs
        .filter((s) => s[2] === O)
        .map(([a, b]) => (
          <line key={a} x1={a} x2={b} y1="686.5" y2="686.5" stroke="#f5a94a" strokeDasharray="4 3" />
        ))}
      <line x1="1488" x2="1544" y1="686.5" y2="686.5" stroke="#eb9a80" />

      {/* leaders */}
      <g stroke="#aaa" strokeWidth="0.8">
        {sideTags.map(([t, x, y]) => (
          <line key={`${t}${y}`} x1="837" x2={x - 16} y1={y} y2={y} />
        ))}
        {facadeTags.map(([t, x]) => (
          <line key={x} x1={x - 11} y1="653" x2={x} y2="686" />
        ))}
        <line x1="838" x2="874" y1="264" y2="264" />
        <line x1="1072" x2="1110" y1="837" y2="837" />
        <line x1="959" y1="929" x2="973" y2="967" />
        <line x1="993" y1="935" x2="1005" y2="967" />
        <line x1="1537" y1="649" x2="1549" y2="686" />
        <line x1="1411" y1="975" x2="1424" y2="1010" />
      </g>

      {/* tags */}
      {sideTags.map(([t, x, y]) => (
        <Tag key={`${t}${y}`} t={t} x={x} y={y} />
      ))}
      {facadeTags.map(([t, x]) => (
        <Tag key={x} t={t} x={x} y={643} />
      ))}
      <Tag t="W19" x={1011} y={924} />
      <BoxTag t="M1" x={874} y={249} />
      <BoxTag t="M1" x={1043} y={822} />
      <BoxTag t="M5" x={959} y={899} />
      <BoxTag t="M5" x={1536} y={619} />
      <BoxTag t="M0" x={1395} y={1010} />

      {/* cursor */}
      <path d="M898 155.500h42M919.500 150v26" stroke="#fff" strokeWidth="1.600" />

      {/* compass */}
      <g stroke="#20e020">
        <ellipse cx="1883" cy="186" rx="27" ry="27" />
        <ellipse cx="1883" cy="186" rx="25" ry="25" />
        <path d="M1860 176l23 11" />
        <path d="M1892 186l9 4-7 3 7 4" />
      </g>
      <polygon points="1859,174 1871,174 1884,184 1882,188 1869,182 1866,185" fill="#20e020" />
    </PlanSvg>
  );
};

const RibbonButton = ({ w, lines, icon, sep }: { w: number; lines: string[]; icon: React.ReactNode; sep?: boolean }) => (
  <RibbonBtn $w={w} $sep={sep}>
    <BtnIcon>{icon}</BtnIcon>
    <BtnLabel $two={lines.length > 1}>
      {lines.map((l) => (
        <div key={l}>{l}</div>
      ))}
    </BtnLabel>
  </RibbonBtn>
);

const App = () => {
  return (
    <Window>
      <GlobalStyle />
      <TitleBar>
        <QuickBar>{quickIcons}</QuickBar>
        <Title>EC700 - [Lavoro POST]</Title>
        <WinControls>
          <Svg s={10}>
            <path d="M0 5.500h9" stroke="#222" strokeWidth="1.300" />
          </Svg>
          <Svg s={10} h={12}>
            <rect x="1.500" y="3.500" width="6" height="7.500" stroke="#222" />
            <path d="M3 3V1h6v7H8" stroke="#222" />
          </Svg>
          <Svg s={11}>
            <path d="M1 .5l9 10M10 .5l-9 10" stroke="#222" />
          </Svg>
        </WinControls>
      </TitleBar>

      <TabRow>
        <FileTab>FILE</FileTab>
        {tabs.map((t) => (
          <RibbonTab key={t} $active={t === 'UTILITY'}>
            {t}
          </RibbonTab>
        ))}
      </TabRow>

      <Ribbon>
        <Group $w={179} $pad={6}>
          <GroupRow>
            <RibbonButton w={52} lines={['Griglia']} icon={<GridIcon />} />
            <RibbonButton w={54} lines={['Snap', 'ad ogg']} icon={<SnapIcon />} />
            <RibbonButton w={66} lines={['Disegno']} icon={<DrawIcon />} />
          </GroupRow>
          <GroupLabel $pad={6}>Impostazioni di disegno</GroupLabel>
        </Group>
        <Group $w={280} $pad={12}>
          <GroupRow>
            <RibbonButton
              w={64}
              lines={['Ingrandisci']}
              icon={
                <Mag>
                  <path d="M9 13h8M13 9v8" stroke="#777" strokeWidth="1.800" />
                </Mag>
              }
            />
            <RibbonButton
              w={56}
              lines={['Riduci']}
              icon={
                <Mag>
                  <path d="M9 13h8" stroke="#777" strokeWidth="2" />
                </Mag>
              }
            />
            <RibbonButton w={38} lines={['Tutto']} icon={<AllIcon />} />
            <RibbonButton w={62} lines={['Finestra']} icon={<WindowIcon />} />
            <RibbonButton w={44} lines={['Pan']} icon={<HandIcon />} sep />
          </GroupRow>
          <GroupLabel $pad={12}>Zoom &amp; Pan</GroupLabel>
        </Group>
        <Group $w={181} $pad={10}>
          <GroupRow>
            <RibbonButton w={68} lines={['Lunghezza']} icon={<LengthIcon />} />
            <RibbonButton w={48} lines={['Area']} icon={<AreaIcon />} />
            <RibbonButton w={48} lines={['Altezza']} icon={<HeightIcon />} />
          </GroupRow>
          <GroupLabel $pad={10}>Strumenti di misura</GroupLabel>
        </Group>
        <Group $w={226} $pad={6}>
          <GroupRow>
            <RibbonButton w={72} lines={['Trova', 'Sostituisci']} icon={<FindIcon />} />
            <RibbonButton w={68} lines={['Sostituisci', 'serramenti']} icon={<SwapIcon />} />
            <RibbonButton w={76} lines={['Ricerca', 'Locali']} icon={<SearchLocIcon />} />
          </GroupRow>
        </Group>
        <Group $w={65} $pad={0}>
          <GroupRow>
            <RibbonButton w={64} lines={['Video', 'tutorial']} icon={<VideoIcon />} />
          </GroupRow>
        </Group>
        <Group $w={381} $pad={15}>
          <GroupRow>
            <RibbonButton w={56} lines={['Configura']} icon={<ConfigIcon />} />
            <RibbonButton w={67} lines={['Inserisci']} icon={<InsertIcon />} />
            <Combo>
              Default Edilclima
              <ComboCaret />
            </Combo>
            <RibbonButton w={66} lines={['Aggiorna']} icon={<RefreshIcon />} />
          </GroupRow>
          <GroupLabel $pad={15}>Legende</GroupLabel>
        </Group>
      </Ribbon>

      <Workspace>
        <CommandPanel>
          <PaneHeader $h={17}>
            Comandi
            <PinIcon />
          </PaneHeader>
          <CollapseRow>
            <Svg s={14} h={12}>
              <path d="M0 3l3 3-3 3zM14 3l-3 3 3 3z" fill="#5b87ad" />
              <path d="M5.500 1v10M8.500 1v10" stroke="#6f93b3" />
            </Svg>
          </CollapseRow>
          {commands.map((c) => (
            <CommandItem key={c.label} $active={c.active}>
              <CommandIcon>{commandIcons[c.icon]}</CommandIcon>
              <CommandLabel $dim={c.dim}>{c.label}</CommandLabel>
              {c.caret && <MenuCaret />}
            </CommandItem>
          ))}
        </CommandPanel>

        <RightArea>
          <RightTop>
            <PropColumn>
              <PaneHeader $h={18}>
                Proprietà
                <PinIcon />
              </PaneHeader>
              <PropPane>
                <SubHeader>Proprietà Piano</SubHeader>
                <ComboRow>
                  <EmptyCombo>
                    <Svg s={9} h={6}>
                      <path d="M1 1l3.500 3.500L8 1" stroke="#c0c0c0" />
                    </Svg>
                  </EmptyCombo>
                  <LayoutBtn>
                    <Svg s={13}>
                      <rect x="0" y="0" width="6" height="8" fill="#b5b5b5" />
                      <rect x="7" y="0" width="6" height="5" fill="#b5b5b5" />
                      <rect x=".5" y="9.500" width="5" height="3" stroke="#b5b5b5" />
                      <rect x="7.500" y="6.500" width="5" height="6" stroke="#b5b5b5" />
                    </Svg>
                  </LayoutBtn>
                </ComboRow>
                <PropGrid>
                  {props.map((p, i) =>
                    p.cat ? (
                      <PropRow key={i} $cat>
                        <Gutter>
                          <Chevron />
                        </Gutter>
                        <CatName>{p.cat}</CatName>
                      </PropRow>
                    ) : (
                      <PropRow key={i}>
                        <Gutter>{p.c && <Chevron />}</Gutter>
                        <PropName $dim={p.d} $indent={p.i}>
                          {p.n}
                        </PropName>
                        <PropValue $dim={p.d} $bold={p.b}>
                          {p.v}
                        </PropValue>
                      </PropRow>
                    ),
                  )}
                </PropGrid>
                <DescBox>Dati generali</DescBox>
              </PropPane>
              <MgmtHeader>Gestione</MgmtHeader>
              <MgmtBody>
                <TabStrip>
                  <MgmtTab $w={53} $active>
                    Piani
                  </MgmtTab>
                  <MgmtTab $w={48}>Layer</MgmtTab>
                  <MgmtTab $w={66}>Legende</MgmtTab>
                </TabStrip>
                <ToolRow>
                  {toolIcons.map((ic) => (
                    <ToolBtn key={ic.key}>{ic}</ToolBtn>
                  ))}
                </ToolRow>
                <TreeBox>
                  <TreeRoot>
                    <Expander />
                    Piante dei piani
                  </TreeRoot>
                  <TreeLeaf>
                    <LeafText>Piano primo</LeafText>
                  </TreeLeaf>
                  <TreeLeaf>
                    <LeafText $selected>Piano terra</LeafText>
                  </TreeLeaf>
                  <TreeLeaf>
                    <LeafText>Piano seminterrato</LeafText>
                  </TreeLeaf>
                </TreeBox>
              </MgmtBody>
            </PropColumn>

            <Canvas>
              <Plan />
              {zones.map((z) => (
                <ZoneBox key={z.y} $x={z.x} $y={z.y} $w={z.w}>
                  {z.lines.map((l) => (
                    <div key={l}>{l}</div>
                  ))}
                </ZoneBox>
              ))}

              <SheetTable $x={1034} $w={313}>
                <colgroup>
                  <col width={33} />
                  <col width={129} />
                  <col width={76} />
                  <col width={75} />
                </colgroup>
                <tbody>
                  <SheetRow $h={20}>
                    <SheetTitle colSpan={4}>Distinta pareti</SheetTitle>
                  </SheetRow>
                  <SheetRow $h={37}>
                    <SheetCell>
                      <SheetLines $lh={19}>
                        Cod
                        <br />
                        ice
                      </SheetLines>
                    </SheetCell>
                    <SheetCell>Descrizione</SheetCell>
                    <SheetCell>
                      <SheetLines $lh={19}>
                        Spessore
                        <br />
                        [cm]
                      </SheetLines>
                    </SheetCell>
                    <SheetCell>
                      <SheetLines $lh={19}>
                        Ue
                        <br />
                        [W/m²K]
                      </SheetLines>
                    </SheetCell>
                  </SheetRow>
                  {wallRows.map(([a, b, c, d, h]) => (
                    <SheetRow key={a} $h={h}>
                      <SheetCell>{a}</SheetCell>
                      <SheetCell>{b}</SheetCell>
                      <SheetCell>{c}</SheetCell>
                      <SheetCell>{d}</SheetCell>
                    </SheetRow>
                  ))}
                  <SheetRow $h={32}>
                    <SheetCell>M9</SheetCell>
                    <SheetCell>
                      <SheetLines $lh={17}>
                        Parete esterna 45
                        <br />
                        scala
                      </SheetLines>
                    </SheetCell>
                    <SheetCell>44</SheetCell>
                    <SheetCell>0.284</SheetCell>
                  </SheetRow>
                </tbody>
              </SheetTable>

              <SheetTable $x={1397} $w={274}>
                <colgroup>
                  <col width={33} />
                  <col width={157} />
                  <col width={84} />
                </colgroup>
                <tbody>
                  <SheetRow $h={18}>
                    <SheetTitle colSpan={3}>Distinta serramenti</SheetTitle>
                  </SheetRow>
                  <SheetRow $h={36}>
                    <SheetCell>
                      <SheetLines $lh={19}>
                        Cod
                        <br />
                        ice
                      </SheetLines>
                    </SheetCell>
                    <SheetCell>
                      <SheetLines $lh={19}>
                        Dimensioni L x H [cm
                        <br />x cm]
                      </SheetLines>
                    </SheetCell>
                    <SheetCell>Ue [W/m²K]</SheetCell>
                  </SheetRow>
                  {windowRows.map(([a, b, c, h]) => (
                    <SheetRow key={a} $h={h}>
                      <SheetCell>{a}</SheetCell>
                      <SheetCell>{b}</SheetCell>
                      <SheetCell>{c}</SheetCell>
                    </SheetRow>
                  ))}
                </tbody>
              </SheetTable>
            </Canvas>
          </RightTop>

          <StatusBar>
            0 trovati
            <Coords>X: 27,610 - Y: 39,081 - Z: 3,320 m</Coords>
            <UnitBox>U.M.: m</UnitBox>
            <ToggleRow>
              {toggles.map(([t, on]) => (
                <Toggle key={t} $on={on}>
                  {t}
                </Toggle>
              ))}
            </ToggleRow>
          </StatusBar>
        </RightArea>
      </Workspace>
    </Window>
  );
};

export default App;
